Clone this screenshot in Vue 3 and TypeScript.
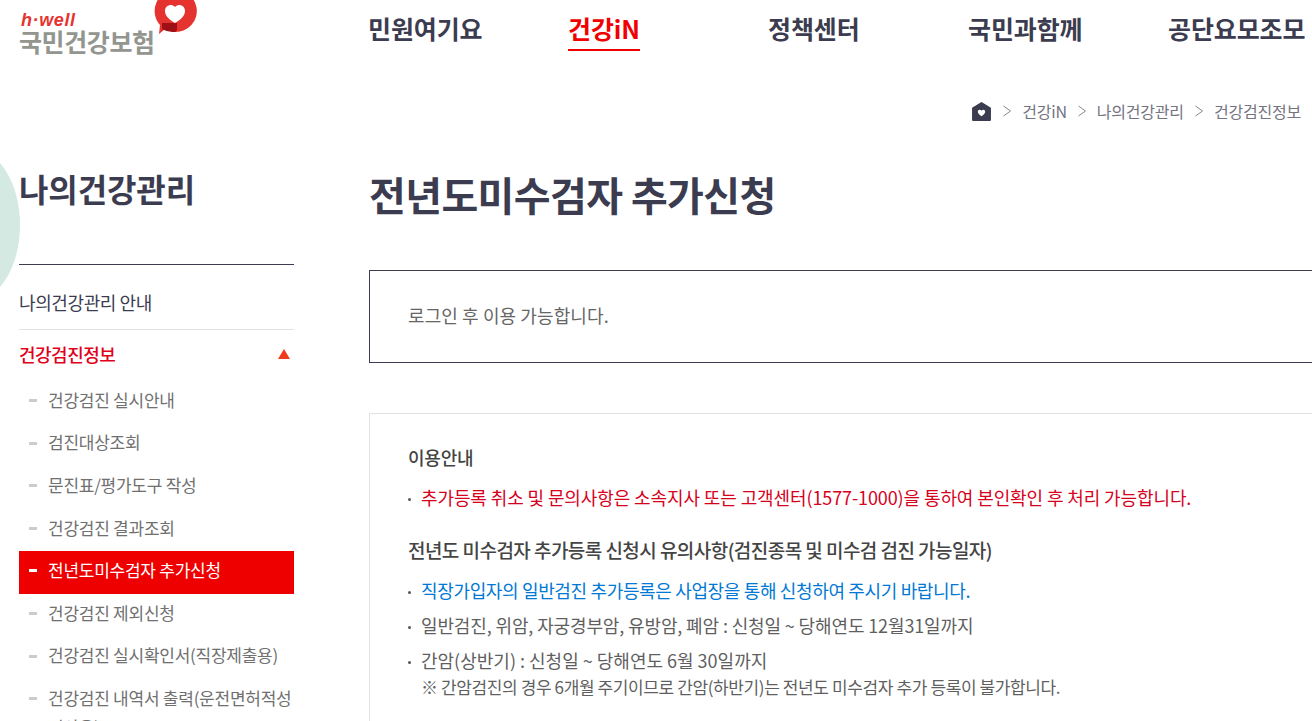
<template>
  <div class="page">
    <div class="blob"></div>
    <header class="top">
      <div class="logo">
        <div class="logo-text">
          <em>h·well</em>
          <strong>국민건강보험</strong>
        </div>
        <svg class="logo-mark" width="46" height="38" viewBox="0 0 46 38">
          <path d="M24 -10a21 21 0 1 1-11 39l-6 5 1-9a21 21 0 0 1 16-35z" fill="#e5342f" />
          <path d="M10 23h15v7l-2 2a21 21 0 0 1-13-3z" fill="#9c1016" />
          <path d="M23 23c-7-4-10-8-10-12 0-4 3-6 6-6 2 0 3 1 4 2 1-1 2-2 4-2 3 0 6 2 6 6 0 4-3 8-10 12z" fill="#fff" />
        </svg>
      </div>
      <nav class="gnb">
        <a v-for="m in menus" :key="m" :class="{ on: m === '건강iN' }"><span>{{ m }}</span></a>
      </nav>
    </header>

    <div class="crumbs">
      <svg class="home" width="21" height="21" viewBox="0 0 20 20">
        <path d="M10 1l9 5.500V18a1 1 0 0 1-1 1H2a1 1 0 0 1-1-1V6.500z" fill="#3c3c50" />
        <path d="M10 14.500c-2.500-1.800-3.500-3-3.500-4.300 0-1.100.8-1.800 1.800-1.800.7 0 1.300.4 1.700 1 .4-.6 1-1 1.700-1 1 0 1.800.7 1.800 1.800 0 1.300-1 2.500-3.500 4.300z" fill="#fff" />
      </svg>
      <template v-for="c in crumbs" :key="c">
        <svg class="gt" width="10" height="12" viewBox="0 0 10 12"><path d="M1.500 1l7 5-7 5" fill="none" stroke="#8a8a8a" /></svg>
        <span>{{ c }}</span>
      </template>
    </div>

    <div class="body">
      <aside class="side">
        <h2>나의건강관리</h2>
        <a class="first">나의건강관리 안내</a>
        <div class="group">
          <span>건강검진정보</span>
          <i class="tri"></i>
        </div>
        <ul>
          <li v-for="s in subs" :key="s" :class="{ on: s === '전년도미수검자 추가신청' }">{{ s }}</li>
        </ul>
      </aside>

      <main class="main">
        <h1>전년도미수검자 추가신청</h1>
        <div class="login">로그인 후 이용 가능합니다.</div>
        <section class="guide">
          <h3>이용안내</h3>
          <p class="item red">추가등록 취소 및 문의사항은 소속지사 또는 고객센터(1577-1000)을 통하여 본인확인 후 처리 가능합니다.</p>
          <h3 class="second">전년도 미수검자 추가등록 신청시 유의사항(검진종목 및 미수검 검진 가능일자)</h3>
          <p class="item blue">직장가입자의 일반검진 추가등록은 사업장을 통해 신청하여 주시기 바랍니다.</p>
          <p class="item">일반검진, 위암, 자궁경부암, 유방암, 폐암 : 신청일 ~ 당해연도 12월31일까지</p>
          <p class="item wide">간암(상반기) : 신청일 ~ 당해연도 6월 30일까지</p>
          <p class="note">※ 간암검진의 경우 6개월 주기이므로 간암(하반기)는 전년도 미수검자 추가 등록이 불가합니다.</p>
        </section>
      </main>
    </div>
  </div>
</template>

<script setup lang="ts">
const menus = ['민원여기요', '건강iN', '정책센터', '국민과함께', '공단요모조모']
const crumbs = ['건강iN', '나의건강관리', '건강검진정보']
const subs = [
  '건강검진 실시안내',
  '검진대상조회',
  '문진표/평가도구 작성',
  '건강검진 결과조회',
  '전년도미수검자 추가신청',
  '건강검진 제외신청',
  '건강검진 실시확인서(직장제출용)',
  '건강검진 내역서 출력(운전면허적성 검사용)',
]
</script>

<style>
html,
body {
  margin: 0;
  overflow: hidden;
  background: #fff;
}
</style>

<style scoped>
.page {
  position: relative;
  width: 1312px;
  height: 721px;
  overflow: hidden;
  font-family: "Noto Sans CJK KR", "Noto Sans", sans-serif;
  color: #3c3c50;
  letter-spacing: -0.5px;
}

.blob {
  position: absolute;
  left: -72px;
  top: 150px;
  width: 92px;
  height: 150px;
  background: #d5e9e3;
  border-radius: 50%;
}

.top {
  display: flex;
  height: 60px;
}

.logo {
  position: relative;
  flex: none;
  width: 368px;
  padding: 12px 0 0 19px;
  box-sizing: border-box;
}

.logo-text em {
  display: block;
  font: italic 700 18px/16px "Liberation Sans", sans-serif;
  color: #e5342f;
  letter-spacing: 0.6px;
  margin-left: 2px;
}

.logo-text strong {
  display: block;
  font-size: 25px;
  line-height: 24px;
  font-weight: 700;
  color: #93968f;
  letter-spacing: -0.4px;
  margin-top: 1px;
}

.logo-mark {
  position: absolute;
  left: 152px;
  top: 0;
}

.gnb {
  display: flex;
  padding-top: 11px;
  font-size: 25px;
  font-weight: 700;
  line-height: 34px;
  letter-spacing: -0.1px;
}

.gnb a {
  width: 200px;
  white-space: nowrap;
}

.gnb span {
  display: inline-block;
  padding-bottom: 4px;
  border-bottom: 2px solid transparent;
}

.gnb a.on span {
  color: #f00000;
  border-bottom-color: #f00000;
}

.crumbs {
  display: flex;
  justify-content: flex-end;
  align-items: center;
  gap: 10px;
  height: 30px;
  margin-top: 36px;
  padding-right: 11px;
  font-size: 16px;
  color: #74747f;
  letter-spacing: -0.2px;
}

.body {
  display: flex;
}

.side {
  width: 275px;
  margin-left: 19px;
  flex: none;
}

.side h2 {
  margin: 40px 0 0;
  height: 98px;
  font-size: 32px;
  line-height: 44px;
  font-weight: 700;
  letter-spacing: -0.1px;
  border-bottom: 1px solid #3c3c50;
}

.first {
  display: block;
  height: 64px;
  line-height: 74px;
  font-size: 18px;
  font-weight: 400;
  letter-spacing: -0.4px;
  border-bottom: 1px solid #e2e2e2;
}

.group {
  display: flex;
  justify-content: space-between;
  align-items: center;
  height: 48px;
  padding-bottom: 3px;
  font-size: 18px;
  font-weight: 500;
  color: #e0001b;
}

.tri {
  width: 0;
  height: 0;
  margin-right: 4px;
  border-left: 6px solid transparent;
  border-right: 6px solid transparent;
  border-bottom: 10px solid #f03a1c;
}

ul {
  margin: 0;
  padding: 0;
  list-style: none;
}

li {
  position: relative;
  padding: 3.800px 0 9.800px 29px;
  line-height: 29px;
  font-size: 17px;
  color: #707070;
  letter-spacing: -0.25px;
}

li::before {
  content: "";
  position: absolute;
  left: 10px;
  top: 18px;
  width: 8px;
  height: 3px;
  background: #ccc;
}

li.on {
  background: #ef0000;
  color: #fff;
}

li.on::before {
  background: #fff;
}

.main {
  margin-left: 75px;
  flex: 1;
  min-width: 0;
}

.main h1 {
  margin: 40px 0 0;
  font-size: 40px;
  line-height: 56px;
  font-weight: 700;
  letter-spacing: -0.6px;
  padding-bottom: 1px;
}

.login {
  margin-top: 47px;
  height: 93px;
  line-height: 89px;
  box-sizing: border-box;
  width: 1000px;
  padding-left: 38px;
  border: 1px solid #3c3c50;
  font-size: 18px;
  color: #666;
  letter-spacing: 0.1px;
}

.guide {
  width: 1000px;
  box-sizing: border-box;
  margin-top: 50px;
  padding: 30px 38px 60px;
  border: 1px solid #e2e2e2;
  font-size: 18px;
}

.guide h3 {
  margin: 0 0 14px;
  font-size: 18px;
  line-height: 26px;
  font-weight: 500;
  color: #444;
  letter-spacing: -0.2px;
}

.guide h3.second {
  margin-top: 27px;
  font-size: 19px;
  letter-spacing: -0.55px;
}

.item {
  position: relative;
  margin: 0 0 9px;
  padding-left: 13px;
  line-height: 26px;
  color: #5f5f5f;
  letter-spacing: -0.13px;
}

.item::before {
  content: "";
  position: absolute;
  left: 0;
  top: 14px;
  width: 3px;
  height: 3px;
  border-radius: 50%;
  background: #555;
}

.item.red {
  color: #d6001c;
  letter-spacing: -0.11px;
}

.item.blue {
  color: #0078d4;
  letter-spacing: -0.35px;
}

.item.wide {
  letter-spacing: 0;
}

.note {
  margin: -8px 0 0 13px;
  font-size: 17px;
  line-height: 26px;
  color: #5f5f5f;
  letter-spacing: -0.39px;
}
</style>
